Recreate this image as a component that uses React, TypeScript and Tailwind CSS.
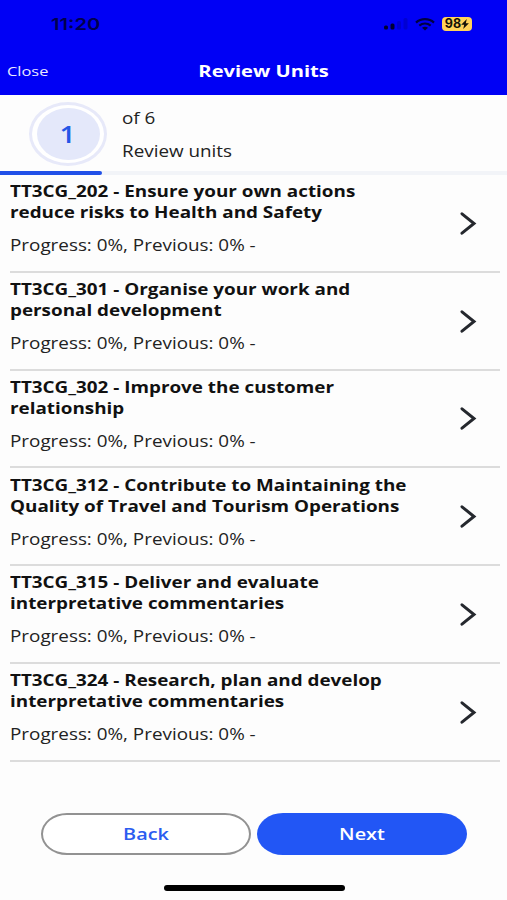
import type { ReactNode } from "react";

const units = [
  ["TT3CG_202 - Ensure your own actions", "reduce risks to Health and Safety"],
  ["TT3CG_301 - Organise your work and", "personal development"],
  ["TT3CG_302 - Improve the customer", "relationship"],
  ["TT3CG_312 - Contribute to Maintaining the", "Quality of Travel and Tourism Operations"],
  ["TT3CG_315 - Deliver and evaluate", "interpretative commentaries"],
  ["TT3CG_324 - Research, plan and develop", "interpretative commentaries"],
];

/** Text in the app's extended letter width, growing from its left edge. */
function Wide({ children, className = "" }: { children: ReactNode; className?: string }) {
  return (
    <span className={`block w-fit origin-left scale-x-[1.216] whitespace-nowrap ${className}`}>
      {children}
    </span>
  );
}

function StatusBar() {
  return (
    <div className="flex h-[48px] items-center justify-between pl-[51px] pr-[35px]">
      <span className="block origin-left scale-x-[1.22] pt-px font-['Inter'] text-[16.5px] font-semibold leading-none text-[#00004d]">
        11:20
      </span>
      <div className="flex items-center">
        <svg width="25" height="14" viewBox="0 0 25 14">
          <rect x="0" y="8.5" width="4" height="4" rx="1.5" fill="#000030" />
          <rect x="6.5" y="6.5" width="4" height="6" rx="1.5" fill="#000030" />
          <rect x="13" y="4" width="4" height="8.5" rx="1.5" fill="#0000d2" />
          <rect x="19.5" y="1" width="4" height="11.5" rx="1.5" fill="#0000d2" />
        </svg>
        <svg className="ml-[6px]" width="20" height="13" viewBox="0 0 20 13" fill="none" stroke="#000040">
          <path d="M1 4.6C6 0 14 0 19 4.6" strokeWidth="2.3" />
          <path d="M4.3 7.6C7.6 4.7 12.4 4.7 15.7 7.6" strokeWidth="2.1" />
          <path d="M7 9.8c1.8-1.5 4.2-1.5 6 0l-3 2.7z" fill="#000040" stroke="none" />
        </svg>
        <div className="ml-[7px] flex h-[14px] w-[30px] items-center justify-center rounded-[4px] bg-[#ffd35a] text-[#151208]">
          <span className="font-['Inter'] text-[12.5px] font-bold leading-none">98</span>
          <svg width="8" height="10" viewBox="0 0 8 10" fill="currentColor">
            <path d="M5.8 0 0.2 5.8h3L2.2 10 7.9 4.2H4.8z" />
          </svg>
        </div>
      </div>
    </div>
  );
}

export default function App() {
  return (
    <div className="flex h-[900px] w-[507px] flex-col overflow-hidden bg-[#fdfdfd] font-['Open_Sans',sans-serif] text-[#222]">
      <header className="h-[95px] shrink-0 bg-[#0000f5] text-white">
        <StatusBar />
        <div className="grid h-[46px] grid-cols-[1fr_auto_1fr] items-center pl-[7px]">
          <Wide className="pt-px text-[13.5px] text-[#e9e9ff]">Close</Wide>
          <span className="block scale-x-[1.22] pl-[10px] text-[16.5px] font-bold">Review Units</span>
          <span />
        </div>
      </header>

      <section className="flex h-[76px] shrink-0 items-center pl-[29px]">
        <div className="mt-[2px] flex h-[64px] w-[78px] items-center justify-center rounded-[50%] border-[3px] border-[#e7e9f9] bg-white">
          <div className="flex h-[52px] w-[63px] items-center justify-center rounded-[50%] bg-[#e4e8fa]">
            <span className="block scale-x-[1.22] text-[23px] font-semibold leading-none text-[#2456e6]">1</span>
          </div>
        </div>
        <div className="ml-[15px] flex flex-col gap-[12px] pt-[3px] text-[15.5px] leading-[21px]">
          <Wide>of 6</Wide>
          <Wide>Review units</Wide>
        </div>
      </section>
      <div className="h-[4px] shrink-0 bg-[#f2f4f8]">
        <div className="h-full w-[102px] rounded-r-full bg-[#2150e8]" />
      </div>

      <ul className="shrink-0 pl-[10px] pr-[7px]">
        {units.map((lines) => (
          <li
            key={lines[0]}
            className="flex h-[97.8px] items-center justify-between border-b-[2.4px] border-[#dcdcdc] pr-[23px]"
          >
            <div className="self-start pt-[6.25px] text-[15.5px] leading-[21px]">
              <h2 className="font-bold text-[#111]">
                <Wide>{lines[0]}</Wide>
                <Wide>{lines[1]}</Wide>
              </h2>
              <Wide className="mt-[12px]">Progress: 0%, Previous: 0% -</Wide>
            </div>
            <svg width="18" height="24" viewBox="0 0 18 24" fill="none" stroke="#25282e" strokeWidth="3">
              <path d="M3 2.8 15 12.5 3 22.2" strokeLinecap="round" strokeLinejoin="miter" />
            </svg>
          </li>
        ))}
      </ul>

      <div className="mt-[51px] flex shrink-0 gap-[6px] pl-[41px]">
        <button className="h-[42px] w-[210px] rounded-[26px/21px] border-[2px] border-[#929292] bg-white text-[16px] font-semibold text-[#2b5cf0]">
          <span className="block scale-x-[1.24]">Back</span>
        </button>
        <button className="h-[42px] w-[210px] rounded-[26px/21px] bg-[#2256f5] text-[16px] font-semibold text-white">
          <span className="block scale-x-[1.24]">Next</span>
        </button>
      </div>
      <div className="ml-[164px] mt-[30px] h-[6px] w-[181px] shrink-0 rounded-full bg-black" />
    </div>
  );
}
